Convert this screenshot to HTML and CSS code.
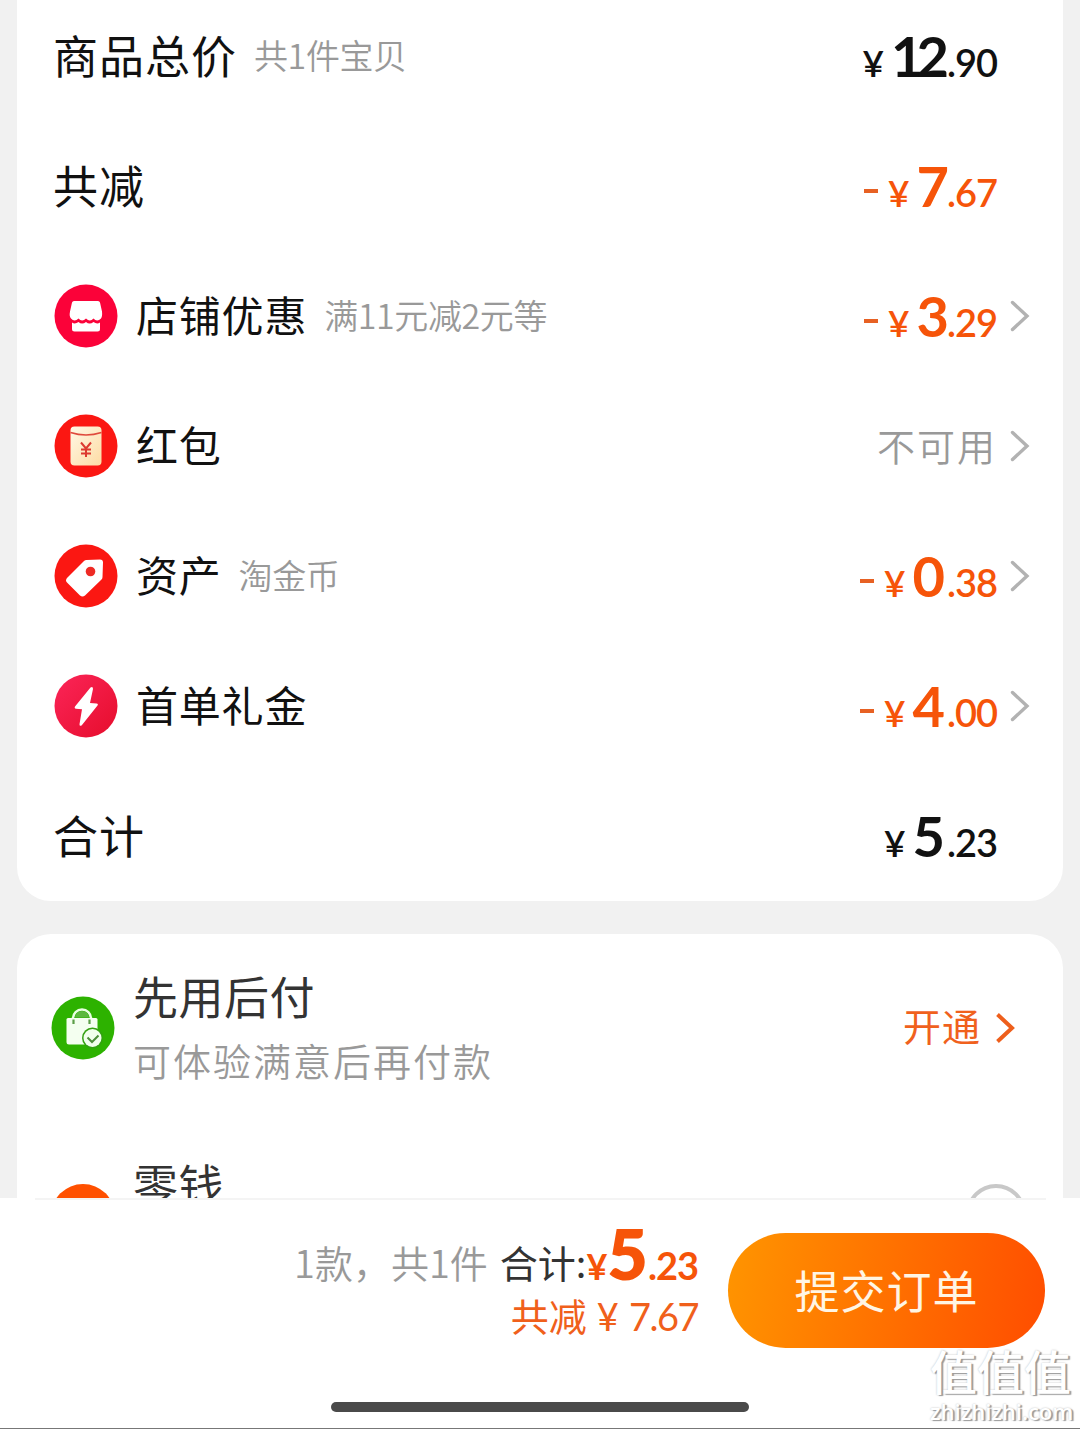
FILE: index.html
```html
<!DOCTYPE html>
<html lang="zh-CN">
<head>
    <meta charset="UTF-8">
    <meta name="viewport" content="width=device-width, initial-scale=1.0">
    <title>确认订单</title>
    <link rel="stylesheet" href="styles.css">
</head>
<body>
    <div class="content">
        <!-- Price details -->
        <div class="card price-card">
            <div class="row">
                <span class="title">商品总价</span>
                <span class="note">共1件宝贝</span>
                <div class="price dark"><span class="yen">¥</span><span class="int wide">12</span><span class="dec">.90</span></div>
            </div>
            <div class="row">
                <span class="title">共减</span>
                <div class="price"><span class="minus"></span><span class="yen">¥</span><span class="int narrow">7</span><span class="dec">.67</span></div>
            </div>
            <div class="row">
                <svg class="icon" viewBox="0 0 64 64">
                    <circle cx="32" cy="32" r="31.5" fill="#fb0239"/>
                    <path d="M20 17h24q1.500 0 2 1.500l2 9q.5 5-1 7-4 4-7.500 0-3.500 4-7.500 0-4 4-7.500 0-4 4-7.500 0-2-2-1-7l2-9q.5-1.500 2-1.500z" fill="#fff"/>
                    <path d="M18 38.500q3 2 6.500-.5 3.500 3 7.500 0 3.500 3 7.500 0 3.500 2.500 6.500.5V45q0 2.500-2.500 2.500h-23Q18 47.500 18 45z" fill="#fff"/>
                </svg>
                <span class="label">店铺优惠</span>
                <span class="note">满11元减2元等</span>
                <div class="price"><span class="minus"></span><span class="yen">¥</span><span class="int narrow">3</span><span class="dec">.29</span></div>
                <svg class="arrow" viewBox="0 0 20 32"><path d="M2.500 2.500 17 16 2.500 29.500"/></svg>
            </div>
            <div class="row">
                <svg class="icon" viewBox="0 0 64 64">
                    <defs>
                        <linearGradient id="packet" x1="0" y1="0" x2="1" y2="1">
                            <stop offset="0" stop-color="#fff8e6"/>
                            <stop offset="1" stop-color="#fddca4"/>
                        </linearGradient>
                    </defs>
                    <circle cx="32" cy="32" r="31.5" fill="#fb1712"/>
                    <rect x="16.500" y="12.500" width="31" height="39" rx="4" fill="url(#packet)"/>
                    <path d="M16.500 18.500q15.500 5 31 0" fill="none" stroke="#df4a3c" stroke-width="1.600"/>
                    <path d="M27 28.500l5 6 5-6M32 34.500V43M27 35.500h10M27 39.500h10" fill="none" stroke="#dc3a30" stroke-width="2"/>
                </svg>
                <span class="label">红包</span>
                <span class="disabled">不可用</span>
                <svg class="arrow" viewBox="0 0 20 32"><path d="M2.500 2.500 17 16 2.500 29.500"/></svg>
            </div>
            <div class="row">
                <svg class="icon" viewBox="0 0 64 64">
                    <circle cx="32" cy="32" r="31.500" fill="#fb1712"/>
                    <path d="M32.500 16 46 15.500q3 0 3 3L48.500 33q0 1.500-1 2.500L31 51.500q-2.500 2-5 0L13 38.500q-2-2 0-4.500L30 17q1-1 2.500-1z" fill="#fff"/>
                    <circle cx="36.500" cy="27.500" r="4.800" fill="#ee2a24"/>
                </svg>
                <span class="label">资产</span>
                <span class="note">淘金币</span>
                <div class="price"><span class="minus"></span><span class="yen">¥</span><span class="int">0</span><span class="dec">.38</span></div>
                <svg class="arrow" viewBox="0 0 20 32"><path d="M2.500 2.500 17 16 2.500 29.500"/></svg>
            </div>
            <div class="row">
                <svg class="icon" viewBox="0 0 64 64">
                    <defs>
                        <linearGradient id="bolt" x1="0" y1="0" x2="1" y2="1">
                            <stop offset="0" stop-color="#fb2558"/>
                            <stop offset="1" stop-color="#e60d2c"/>
                        </linearGradient>
                    </defs>
                    <circle cx="32" cy="32" r="31.5" fill="url(#bolt)"/>
                    <path d="M36.500 13.500 21 32.500q-1 2 1 2.300l6 .4-2.500 15q0 2.500 2.300 1L43.500 31.500q1-1.800-1-2l-6.500-.5 3-14q0-3-2.500-1.500z" fill="#fff"/>
                </svg>
                <span class="label">首单礼金</span>
                <div class="price"><span class="minus"></span><span class="yen">¥</span><span class="int">4</span><span class="dec">.00</span></div>
                <svg class="arrow" viewBox="0 0 20 32"><path d="M2.500 2.500 17 16 2.500 29.500"/></svg>
            </div>
            <div class="row">
                <span class="title">合计</span>
                <div class="price dark"><span class="yen">¥</span><span class="int">5</span><span class="dec">.23</span></div>
            </div>
        </div>

        <!-- Payment methods -->
        <div class="card pay-card">
            <div class="pay-row">
                <svg class="icon" viewBox="0 0 64 64">
                    <circle cx="32" cy="32" r="31.500" fill="#2db200"/>
                    <path d="M22 24v-1.500a9 9 0 0 1 18 0V24" fill="none" stroke="#e9ffe2" stroke-width="2.500"/>
                    <path d="M17 22h28q1.500 0 1.500 1.500V46q0 2.500-2.500 2.500H18q-2.500 0-2.500-2.500V23.500Q15.500 22 17 22z" fill="#f4fff0"/>
                    <path d="M24 21.500q1-6.500 7-6.500t7 6.500z" fill="#5cb83f"/>
                    <path d="M22.500 23.500v4.500M38.500 23.500v4.500" stroke="#5b9e48" stroke-width="2.200"/>
                    <circle cx="41.500" cy="42" r="10.500" fill="#33a111"/>
                    <circle cx="41.500" cy="42" r="9" fill="#f1ffec"/>
                    <path d="M36.500 41.500l4.500 4.500 6.500-6.500" fill="none" stroke="#4c8d39" stroke-width="2"/>
                </svg>
                <div class="pay-text">
                    <div class="pay-name">先用后付</div>
                    <div class="pay-desc">可体验满意后再付款</div>
                </div>
                <span class="open">开通</span>
                <svg class="arrow orange" viewBox="0 0 20 32"><path d="M2.500 2.500 17 16 2.500 29.500"/></svg>
            </div>
            <div class="pay-row change">
                <span class="icon change-icon"></span>
                <div class="pay-name">零钱</div>
                <span class="radio"></span>
            </div>
        </div>
    </div>

    <!-- Submit bar -->
    <div class="footer">
        <div class="divider"></div>
        <div class="submit-bar">
            <div class="summary">
                <div class="summary-total">
                    <span class="count">1款，共1件</span>
                    <span class="total-label">合计:</span>
                    <div class="price total"><span class="yen">¥</span><span class="int">5</span><span class="dec">.23</span></div>
                </div>
                <div class="summary-off"><span class="off-label">共减</span><span class="off-yen">¥</span><span class="off-num">7.67</span></div>
            </div>
            <button class="submit">提交订单</button>
        </div>
        <div class="home-bar"></div>
    </div>

    <div class="watermark">
        <div class="mark-name">值值值</div>
        <div class="mark-url">zhizhizhi.com</div>
    </div>
</body>
</html>
```

FILE: styles.css
```css
* {
    margin: 0;
    padding: 0;
    box-sizing: border-box;
}

body {
    position: relative;
    display: flex;
    flex-direction: column;
    width: 1080px;
    height: 1429px;
    overflow: hidden;
    background: #f1f1f1;
    font-family: "Noto Sans CJK SC", sans-serif;
    color: #111;
    white-space: nowrap;
}

.content {
    height: 1198px;
    padding: 0 17px;
    overflow: hidden;
}

.card {
    background: #fff;
    border-radius: 34px;
}

.price-card {
    margin-top: -9px;
    padding: 0 33px 0 36px;
    border-radius: 0 0 34px 34px;
}

.row {
    display: flex;
    align-items: center;
    height: 130px;
}

.title {
    padding-bottom: 2px;
    font-size: 45px;
    letter-spacing: 1px;
    line-height: 64px;
}

.label {
    margin-left: 18px;
    padding-bottom: 4px;
    font-size: 42px;
    letter-spacing: .8px;
    line-height: 64px;
}

.note {
    margin-left: 17px;
    padding-bottom: 3px;
    font-size: 34px;
    font-weight: 350;
    letter-spacing: -.4px;
    color: #999;
}

.icon {
    flex: none;
    width: 64px;
    height: 64px;
    margin-left: 1px;
}

.price {
    display: flex;
    align-items: baseline;
    margin-left: auto;
    padding-top: 6px;
    font-family: Lato, sans-serif;
    font-weight: 600;
    line-height: 64px;
    color: #f65409;
}

.price.dark {
    color: #111;
}

.row .price:last-child {
    margin-right: 33px;
}

.minus {
    align-self: center;
    width: 14px;
    height: 4px;
    margin: 4px 10px 0 0;
    background: #e76123;
}

.yen {
    margin-right: 7px;
    font-size: 37px;
}

.int {
    font-size: 56px;
    font-weight: 700;
}

.int.narrow {
    letter-spacing: -4px;
}

.int.wide {
    margin-right: 3px;
    letter-spacing: -7px;
}

.dec {
    margin-left: 2px;
    font-size: 38px;
    letter-spacing: -1px;
}

.disabled {
    margin-left: auto;
    padding-bottom: 4px;
    font-size: 38px;
    letter-spacing: 2px;
    font-weight: 350;
    color: #999;
}

.arrow {
    flex: none;
    width: 20px;
    height: 32px;
    margin-left: 13px;
    fill: none;
    stroke: #b2b2b2;
    stroke-width: 3.4;
    stroke-linecap: round;
}

.arrow.orange {
    margin-left: 14px;
    stroke: #ee5f1c;
    stroke-width: 4;
    stroke-linecap: butt;
}

.pay-card {
    height: 400px;
    margin-top: 33px;
    padding: 0 48px 0 33px;
}

.pay-row {
    display: flex;
    align-items: center;
    height: 187px;
}

.pay-text {
    margin-left: 18px;
    padding-bottom: 2px;
}

.pay-name {
    font-size: 45px;
    letter-spacing: .5px;
    line-height: 64px;
    color: #333;
}

.pay-desc {
    margin-top: 2px;
    font-size: 38px;
    font-weight: 350;
    letter-spacing: 2px;
    line-height: 60px;
    color: #999;
}

.open {
    margin-left: auto;
    padding-bottom: 6px;
    font-size: 38px;
    letter-spacing: 1px;
    color: #f0611d;
}

.change {
    align-items: flex-start;
    height: 213px;
    padding-top: 29px;
}

.change-icon {
    margin-top: 34px;
    border-radius: 50%;
    background: #ff5000;
}

.change .pay-name {
    margin: 2px 0 0 18px;
}

.radio {
    width: 60px;
    height: 60px;
    margin-top: 34px;
    margin-left: auto;
    margin-right: -11px;
    border: 4px solid #c8c8c8;
    border-radius: 50%;
}

.footer {
    display: flex;
    flex-direction: column;
    align-items: center;
    height: 231px;
    background: #fff;
    border-bottom: 1px solid #777;
}

.divider {
    width: 1011px;
    height: 2px;
    background: #f4f4f4;
}

.submit-bar {
    display: flex;
    width: 100%;
    height: 202px;
    padding-right: 35px;
    justify-content: flex-end;
    align-items: flex-start;
}

.summary {
    margin: 25px 30px 0 0;
}

.summary-total {
    display: flex;
    align-items: flex-start;
    justify-content: flex-end;
    height: 64px;
    line-height: 73px;
}

.count {
    margin-right: 12px;
    font-size: 38px;
    font-weight: 350;
    color: #999;
}

.total-label {
    font-size: 38px;
    color: #333;
}

.price.total {
    margin: 0;
    padding: 0;
    font-weight: 700;
    line-height: 57px;
}

.total .yen {
    margin-right: 0;
    font-size: 36px;
}

.total .int {
    font-size: 70px;
    font-weight: 800;
}

.total .dec {
    margin-left: 0;
}

.summary-off {
    display: flex;
    justify-content: flex-end;
    align-items: baseline;
    font-size: 38px;
    line-height: 52px;
    color: #f0601b;
}

.off-yen,
.off-num {
    margin-left: 10px;
    font-family: Lato, sans-serif;
}

.off-num {
    letter-spacing: -1.5px;
}

.submit {
    width: 317px;
    height: 115px;
    margin-top: 33px;
    padding-bottom: 3px;
    border: none;
    border-radius: 58px;
    background: linear-gradient(100deg, #ff9500, #ff4d00);
    color: #fff5e4;
    font-family: inherit;
    font-size: 45px;
    letter-spacing: 1px;
}

.home-bar {
    width: 418px;
    height: 10px;
    border-radius: 5px;
    background: #4a4a4a;
}

.watermark {
    position: absolute;
    right: 9px;
    bottom: 4px;
    width: 141px;
    color: #fff;
    text-shadow: 2px 1px 1px #999, 0 0 2px #bbb;
}

.mark-name {
    font-size: 47px;
    font-weight: 500;
    line-height: 54px;
}

.mark-url {
    font-family: "Open Sans", sans-serif;
    font-size: 22px;
    font-weight: 600;
    line-height: 28px;
}
```
